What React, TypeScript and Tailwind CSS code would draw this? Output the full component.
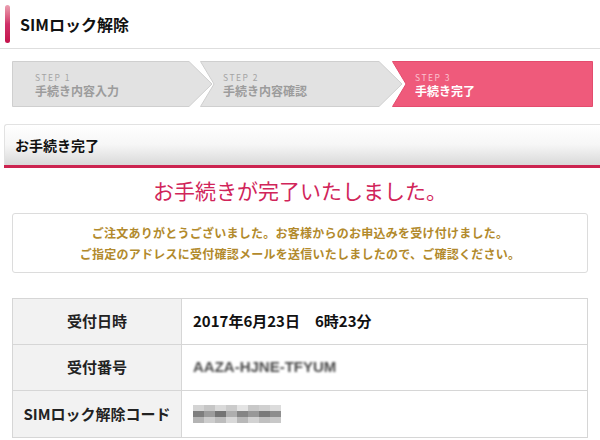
import React from 'react';

const font = { fontFamily: '"Noto Sans CJK JP", "Noto Sans", sans-serif' };

function Step({
  no,
  label,
  active,
  first,
  last,
  width,
}: {
  no: number;
  label: string;
  active?: boolean;
  first?: boolean;
  last?: boolean;
  width: number;
}) {
  const w = width;
  const h = 46;
  const pts = [
    '0.5,0.5',
    last ? `${w - 0.5},0.5` : `${w - 24},0.5`,
    last ? `${w - 0.5},${h - 0.5}` : `${w - 1},${h / 2}`,
    last ? '' : `${w - 24},${h - 0.5}`,
    `0.5,${h - 0.5}`,
    first ? '' : `14,${h / 2}`,
  ]
    .filter(Boolean)
    .join(' ');

  return (
    <div className="relative h-[46px] shrink-0" style={{ width: w }}>
      <svg className="absolute inset-0" width={w} height={h} viewBox={`0 0 ${w} ${h}`}>
        <polygon
          points={pts}
          fill={active ? '#ef5a7b' : '#e2e2e2'}
          stroke={active ? '#e44c6e' : '#cfcfcf'}
          strokeWidth="1"
        />
      </svg>
      <div className="relative flex h-full flex-col justify-center pl-[23px] pt-[2px]">
        <span
          className={`text-[8.5px] leading-[10px] tracking-[1.5px] ${active ? 'text-[#fbc3cf]' : 'text-[#a4a4a4]'}`}
        >
          STEP {no}
        </span>
        <span className={`text-[12px] font-bold leading-[17px] ${active ? 'text-white' : 'text-[#9c9c9c]'}`}>
          {label}
        </span>
      </div>
    </div>
  );
}

function Row({ label, children, last }: { label: string; children: React.ReactNode; last?: boolean }) {
  return (
    <div className={`flex h-[46px] ${last ? '' : 'border-b border-[#d6d6d6]'}`}>
      <div className="flex w-[169px] shrink-0 items-center justify-center border-r border-[#d6d6d6] bg-[#f2f2f2] text-[15px] font-bold text-[#222]">
        {label}
      </div>
      <div className="flex flex-1 items-center pl-[11px] text-[15px] font-bold text-[#111]">{children}</div>
    </div>
  );
}

const codeBlocks = [
  ['#d4d4d4', '#c6c6c6', '#dadada', '#cbcbcb', '#e4e4e4', '#c8c8c8', '#d0d0d0', '#dcdcdc'],
  ['#7e7e7e', '#9c9c9c', '#747474', '#aeaeae', '#858585', '#989898', '#7a7a7a', '#8e8e8e'],
  ['#b4b4b4', '#cdcdcd', '#bcbcbc', '#d8d8d8', '#b8b8b8', '#d2d2d2', '#c0c0c0', '#c8c8c8'],
];

export default function App() {
  return (
    <div className="h-[440px] w-[600px] overflow-hidden bg-white" style={font}>
      {/* page title */}
      <div className="flex h-[49px] items-start border-b border-[#dedede] pl-[5px] pt-[5px]">
        <div className="h-[38px] w-[5px] rounded-full bg-gradient-to-b from-[#eaa0b2] via-[#d0306a] to-[#c4104a]" />
        <h1 className="ml-[10px] mt-[9px] text-[16px] font-bold leading-[20px] text-[#111]">SIMロック解除</h1>
      </div>

      {/* steps */}
      <div className="mt-[12px] flex pl-[12px]">
        <Step no={1} label="手続き内容入力" first width={201} />
        <div className="-ml-[13px]">
          <Step no={2} label="手続き内容確認" width={203} />
        </div>
        <div className="-ml-[11px]">
          <Step no={3} label="手続き完了" active last width={201} />
        </div>
      </div>

      {/* section head */}
      <div className="ml-[4px] mt-[17px] flex h-[41px] items-center rounded-tl-[3px] border-l border-t border-[#e2e2e2] bg-gradient-to-b from-white via-[#f6f6f6] to-[#d9d9d9] pl-[10px]">
        <h2 className="text-[14px] font-bold text-[#111]">お手続き完了</h2>
      </div>
      <div className="ml-[4px] h-[3px] bg-[#cc2450]" />

      <p className="mt-[9px] text-center text-[21px] leading-[26px] text-[#d1255a]">お手続きが完了いたしました。</p>

      <div className="mx-[12px] mt-[10px] flex h-[60px] flex-col items-center justify-center rounded-[3px] border border-[#dcdcdc] text-[12px] font-bold leading-[21px] tracking-[0.25px] text-[#b28a2c]">
        <p>ご注文ありがとうございました。お客様からのお申込みを受け付けました。</p>
        <p>ご指定のアドレスに受付確認メールを送信いたしましたので、ご確認ください。</p>
      </div>

      <div className="mx-[12px] mt-[25px] border border-[#d6d6d6]">
        <Row label="受付日時">2017年6月23日　6時23分</Row>
        <Row label="受付番号">
          <span className="text-[#4a4a4a] blur-[0.8px]" style={{ fontFamily: '"Liberation Sans", sans-serif' }}>
            AAZA-HJNE-TFYUM
          </span>
        </Row>
        <Row label="SIMロック解除コード" last>
          <div className="flex flex-col blur-[0.6px]">
            {codeBlocks.map((r, i) => (
              <div key={i} className="flex">
                {r.map((c, j) => (
                  <div key={j} className="h-[6px] w-[11px]" style={{ backgroundColor: c }} />
                ))}
              </div>
            ))}
          </div>
        </Row>
      </div>
    </div>
  );
}
